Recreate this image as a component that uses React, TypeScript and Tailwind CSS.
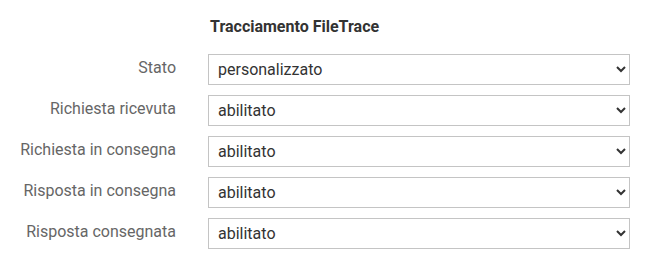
import React from "react";

const rows = [
  { id: "stato", label: "Stato", value: "personalizzato", options: ["disabilitato", "abilitato", "personalizzato"] },
  { id: "richiesta-ricevuta", label: "Richiesta ricevuta", value: "abilitato", options: ["abilitato", "disabilitato"] },
  { id: "richiesta-consegna", label: "Richiesta in consegna", value: "abilitato", options: ["abilitato", "disabilitato"] },
  { id: "risposta-consegna", label: "Risposta in consegna", value: "abilitato", options: ["abilitato", "disabilitato"] },
  { id: "risposta-consegnata", label: "Risposta consegnata", value: "abilitato", options: ["abilitato", "disabilitato"] },
];

export default function App() {
  return (
    <div className="w-[652px] h-[264px] bg-white font-['Roboto',sans-serif] pt-[16px]">
      <div className="grid grid-cols-[176px_422px] gap-x-8">
        <div />
        <h3 className="pl-[2px] text-[16px] leading-[22px] font-bold text-[#333]">
          Tracciamento FileTrace
        </h3>
      </div>

      {/* Righe del form */}
      <div className="mt-[16px] flex flex-col gap-[10px]">
        {rows.map((row) => (
          <div key={row.id} className="grid grid-cols-[176px_422px] gap-x-8">
            <label
              htmlFor={row.id}
              className="pt-[4px] text-right text-[16px] leading-[20px] text-[#666]"
            >
              {row.label}
            </label>
            <select
              id={row.id}
              defaultValue={row.value}
              className="h-[31px] w-full border border-[#c4c4c4] bg-white pl-[5px] pr-2 text-[16px] text-[#333]"
            >
              {row.options.map((opt) => (
                <option key={opt} value={opt}>
                  {opt}
                </option>
              ))}
            </select>
          </div>
        ))}
      </div>
    </div>
  );
}
